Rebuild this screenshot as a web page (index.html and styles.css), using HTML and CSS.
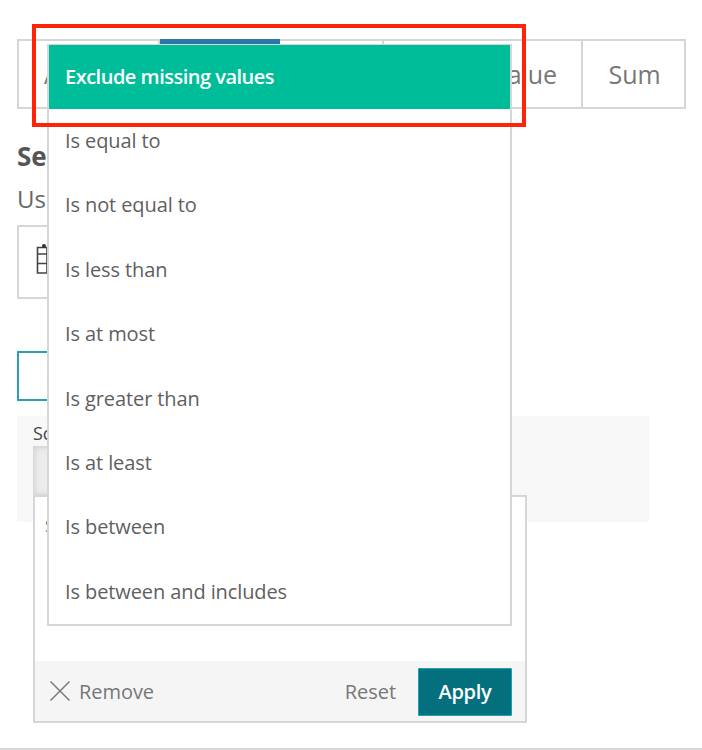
FILE: index.html
```html
<!DOCTYPE html>
<html lang="en">
<head>
<meta charset="utf-8">
<title>Filter</title>
<link rel="stylesheet" href="styles.css">
</head>
<body>
<div class="page">
  <div class="tabs">
    <div class="tab tab-a">Average</div>
    <div class="tab tab-b"></div>
    <div class="tab tab-c"></div>
    <div class="tab tab-d">Value</div>
    <div class="tab tab-e">Sum</div>
  </div>
  <h2 class="heading">Set</h2>
  <p class="sub">Use</p>
  <div class="field">
    <svg class="field-icon" width="14" height="32" viewBox="0 0 14 32">
      <path d="M1.5 4.5H11V30H1.5ZM1.5 11H11M1.5 20.5H11" fill="none" stroke="#444" stroke-width="1.6"/>
      <circle cx="8" cy="3" r="2" fill="#333"/>
    </svg>
  </div>
  <div class="add-btn">Add</div>
  <div class="panel">
    <div class="panel-label">Sc</div>
    <div class="panel-btn"></div>
  </div>
  <div class="rule"></div>
</div>

<div class="popover">
  <div class="popover-body">S</div>
  <div class="popover-foot">
    <span class="remove">
      <svg width="22" height="22" viewBox="0 0 22 22"><path d="M1.5 1.5L20.5 20.5M20.5 1.5L1.5 20.5" stroke="#7a7a7a" stroke-width="1.5" fill="none"/></svg>
      Remove
    </span>
    <span class="reset">Reset</span>
    <button class="apply">Apply</button>
  </div>
</div>

<ul class="menu">
  <li class="menu-item selected">Exclude missing values</li>
  <li class="menu-item">Is equal to</li>
  <li class="menu-item">Is not equal to</li>
  <li class="menu-item">Is less than</li>
  <li class="menu-item">Is at most</li>
  <li class="menu-item">Is greater than</li>
  <li class="menu-item">Is at least</li>
  <li class="menu-item">Is between</li>
  <li class="menu-item">Is between and includes</li>
</ul>

<div class="callout"></div>
</body>
</html>
```

FILE: styles.css
```css
* { box-sizing: border-box; }
html, body { margin: 0; padding: 0; }
body {
  width: 702px;
  height: 750px;
  overflow: hidden;
  background: #fff;
  font-family: "Open Sans", sans-serif;
  color: #555;
  position: relative;
}
.page { padding: 39px 16px 0 17px; height: 750px; display: flex; flex-direction: column; }
.tabs {
  display: flex;
  width: 669px;
  height: 70px;
  border: 2px solid #d6d6d6;
  flex: none;
}
.tab {
  display: flex;
  align-items: center;
  justify-content: center;
  font-size: 25px;
  letter-spacing: -0.1px;
  color: #777;
  border-right: 2px solid #d6d6d6;
}
.tab-a { width: 141px; justify-content: flex-start; padding-left: 25px; }
.tab-b { width: 120px; border-top: 5px solid #2a77a8; margin-top: -2px; border-right: 0; }
.tab-c { width: 104px; }
.tab-d { width: 199px; justify-content: flex-end; padding-right: 24px; }
.tab-e { flex: 1; border-right: 0; padding-left: 2px; }
.heading { margin: 28px 0 0; font-size: 26px; line-height: 38px; font-weight: 700; color: #555; }
.sub { margin: 8px 0 0; font-size: 24px; line-height: 32px; color: #666; }
.field {
  margin-top: 10px;
  width: 300px;
  height: 74px;
  border: 2px solid #d6d6d6;
  padding: 16px 0 0 17px;
  flex: none;
}
.field-icon { display: block; overflow: visible; }
.add-btn {
  margin-top: 52px;
  width: 200px;
  height: 50px;
  border: 2px solid #2b9fb0;
  padding-left: 28px;
  font-size: 18px;
  line-height: 44px;
  color: #04707e;
  flex: none;
}
.panel {
  margin-top: 15px;
  width: 632px;
  height: 106px;
  background: #f8f8f8;
  padding: 4px 16px 0;
  flex: none;
}
.panel-label { font-size: 18px; line-height: 26px; color: #444; }
.panel-btn {
  width: 200px;
  height: 50px;
  background: #ececec;
  box-shadow: inset 0 0 5px 2px #d2d2d2;
}
.rule { margin: auto -17px 0; height: 2px; background: #d6d6d6; flex: none; }
.popover {
  position: absolute;
  left: 33px;
  top: 495px;
  width: 494px;
  height: 228px;
  background: #fff;
  border: 2px solid #d6d6d6;
  display: flex;
  flex-direction: column;
}
.popover-body { flex: 1; padding: 18px 0 0 10px; font-size: 16px; line-height: 22px; color: #777; }
.popover-foot {
  height: 60px;
  background: #f5f5f5;
  display: flex;
  align-items: center;
  padding: 0 13px 0 14px;
  font-size: 20px;
  letter-spacing: -0.05px;
  color: #777;
}
.remove { display: flex; align-items: center; gap: 8px; margin-right: auto; }
.remove svg { display: block; }
.reset { margin-right: 22px; }
.apply {
  width: 94px;
  height: 48px;
  margin-top: 2px;
  background: #04707e;
  border: 1.5px solid #12a3b4;
  border-radius: 1px;
  color: #fff;
  font: 600 20px "Open Sans", sans-serif;
  letter-spacing: -0.3px;
  padding: 0 0 2px;
}
.menu {
  position: absolute;
  left: 47px;
  top: 44px;
  width: 465px;
  height: 582px;
  margin: 0;
  padding: 0;
  list-style: none;
  background: #fff;
  border: 2px solid #d6d6d6;
  border-top-width: 1px;
}
.menu-item {
  height: 64.4px;
  display: flex;
  align-items: center;
  padding: 0 0 2px 16px;
  font-size: 20px;
  letter-spacing: -0.1px;
  color: #5f5f5f;
}
.menu-item.selected { background: #00bd9a; color: #fff; font-weight: 600; letter-spacing: -0.5px; }
.callout {
  position: absolute;
  left: 32px;
  top: 24px;
  width: 494px;
  height: 103px;
  border: 4px solid #ff2408;
}
```
